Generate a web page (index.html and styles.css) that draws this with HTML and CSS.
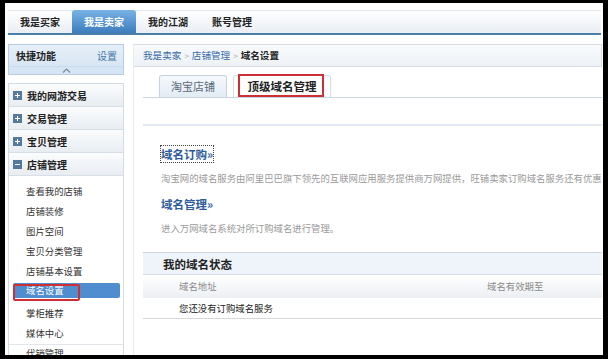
FILE: index.html
```html
<!DOCTYPE html>
<html lang="zh-CN">
<head>
    <meta charset="UTF-8">
    <title>域名设置</title>
    <link rel="stylesheet" href="styles.css">
</head>
<body>
    <div class="page">
        <div class="topnav">
            <a class="nav-tab">我是买家</a>
            <a class="nav-tab active">我是卖家</a>
            <a class="nav-tab">我的江湖</a>
            <a class="nav-tab">账号管理</a>
        </div>

        <div class="layout">
            <div class="sidebar">
                <div class="quick">
                    <span>快捷功能</span>
                    <a>设置</a>
                </div>
                <div class="fold">
                    <svg width="9" height="5" viewBox="0 0 9 5"><path d="M1 4.5 L4.5 1 L8 4.5" fill="none" stroke="#7d8c9a" stroke-width="1.2"/></svg>
                </div>

                <div class="menu">
                    <div class="menu-item"><i class="ico plus"></i>我的网游交易</div>
                    <div class="menu-item"><i class="ico plus"></i>交易管理</div>
                    <div class="menu-item"><i class="ico plus"></i>宝贝管理</div>
                    <div class="menu-item"><i class="ico minus"></i>店铺管理</div>
                    <ul class="sub">
                        <li>查看我的店铺</li>
                        <li>店铺装修</li>
                        <li>图片空间</li>
                        <li>宝贝分类管理</li>
                        <li>店铺基本设置</li>
                        <li class="current"><span>域名设置</span></li>
                        <li>掌柜推荐</li>
                        <li>媒体中心</li>
                    </ul>
                    <div class="sub-more">代销管理</div>
                </div>
            </div>

            <div class="main">
                <div class="crumb">
                    <a>我是卖家</a><span class="sep">&gt;</span><a>店铺管理</a><span class="sep">&gt;</span><b>域名设置</b>
                </div>

                <div class="tabs">
                    <div class="tab">淘宝店铺</div>
                    <div class="tab active"><span>顶级域名管理</span></div>
                </div>

                <div class="panel">
                    <h3><a class="focus">域名订购»</a></h3>
                    <p>淘宝网的域名服务由阿里巴巴旗下领先的互联网应用服务提供商万网提供，旺铺卖家订购域名服务还有优惠</p>
                    <h3 class="second"><a>域名管理»</a></h3>
                    <p>进入万网域名系统对所订购域名进行管理。</p>
                </div>

                <div class="status">
                    <div class="status-head">我的域名状态</div>
                    <div class="status-cols">
                        <span class="col-name">域名地址</span>
                        <span>域名有效期至</span>
                    </div>
                    <div class="status-row">您还没有订购域名服务</div>
                </div>
            </div>
        </div>
    </div>
</body>
</html>
```

FILE: styles.css
```css
body {
    margin: 0;
    padding: 0;
    background-color: #000000;
    font-family: "Noto Sans CJK SC", "Liberation Sans", sans-serif;
    font-size: 9.4px;
    color: #333333;
}

a {
    cursor: pointer;
}

.page {
    margin: 3px 5px 0 5px;
    width: 598px;
    height: 352px;
    background-color: #ffffff;
    overflow: hidden;
}

/* top navigation */

.topnav {
    display: flex;
    margin: 7px 2px 0 3px;
    height: 22px;
    border-top: 1px solid #e4e8ec;
    border-bottom: 2px solid #4a7fab;
    background: linear-gradient(#ffffff, #e9eef3);
}

.nav-tab {
    width: 64px;
    line-height: 22px;
    text-align: center;
    font-size: 10px;
    font-weight: bold;
    color: #222222;
}

.nav-tab.active {
    margin-top: -1px;
    line-height: 23px;
    border-radius: 3px 3px 0 0;
    background: linear-gradient(#78b3e4, #3d7dbd);
    color: #ffffff;
}

.layout {
    display: flex;
    gap: 9px;
    margin-top: 9px;
    padding-left: 3px;
}

/* sidebar */

.sidebar {
    width: 116px;
    flex-shrink: 0;
}

.quick {
    display: flex;
    justify-content: space-between;
    align-items: center;
    box-sizing: border-box;
    height: 22px;
    padding: 0 6px 0 7px;
    border: 1px solid #b8cde2;
    border-bottom: none;
    background: linear-gradient(#e6eff8, #d8e6f3);
    font-size: 10px;
}

.quick span {
    font-weight: bold;
    color: #222222;
}

.quick a {
    color: #4776ad;
}

.fold {
    display: flex;
    justify-content: center;
    align-items: center;
    box-sizing: border-box;
    height: 9px;
    border: 1px solid #b8cde2;
    border-top-color: #c9dae9;
    background-color: #d6e5f3;
}

.menu {
    margin-top: 8px;
    border: 1px solid #d3dbe3;
    border-bottom: none;
}

.menu-item {
    display: flex;
    align-items: center;
    box-sizing: border-box;
    height: 23px;
    padding-left: 4px;
    border-bottom: 1px solid #d7dee5;
    background: linear-gradient(#fbfcfd, #e8edf2);
    font-size: 10px;
    font-weight: bold;
    color: #222222;
}

.ico {
    position: relative;
    width: 9px;
    height: 9px;
    margin-right: 5px;
    background-color: #55799d;
}

.ico::before,
.ico.plus::after {
    content: "";
    position: absolute;
    background-color: #ffffff;
}

.ico::before {
    left: 2px;
    top: 4px;
    width: 5px;
    height: 1px;
}

.ico.plus::after {
    left: 4px;
    top: 2px;
    width: 1px;
    height: 5px;
}

.sub {
    list-style: none;
    margin: 0;
    padding: 5px 0 1px 0;
    border-bottom: 1px solid #e2e6ea;
}

.sub li {
    height: 20px;
    line-height: 20px;
    padding-left: 17px;
}

.sub li.current {
    position: relative;
    padding-left: 0;
}

.sub li.current span {
    display: block;
    margin: 2px 3px 0 4px;
    height: 15px;
    line-height: 15px;
    padding-left: 13px;
    border-radius: 2px;
    background-color: #508dcf;
    color: #ffffff;
}

.sub li.current::after {
    content: "";
    position: absolute;
    left: 4px;
    top: 1px;
    width: 63px;
    height: 13px;
    border: 2px solid #cf2f33;
    border-radius: 2px;
}

.sub-more {
    height: 20px;
    line-height: 16px;
    padding-left: 17px;
}

/* main area */

.main {
    width: 468px;
    min-width: 0;
    white-space: nowrap;
    overflow: hidden;
    border-left: 1px solid #e6ebf0;
    height: 320px;
}

.crumb {
    box-sizing: border-box;
    height: 23px;
    line-height: 21px;
    padding-left: 9px;
    border: 1px solid #d6dee6;
    border-left: none;
    background: linear-gradient(#f8fafc, #eef2f6);
    font-size: 9.6px;
}

.crumb a {
    color: #3a6aa8;
}

.crumb b {
    color: #222222;
}

.crumb .sep {
    margin: 0 3px;
    font-size: 8px;
    color: #a0a8b0;
}

.tabs {
    display: flex;
    gap: 6px;
    margin: 8px 0 0 9px;
    padding-left: 16px;
    border-bottom: 1px solid #cbd6e1;
}

.tab {
    box-sizing: border-box;
    width: 68px;
    height: 22px;
    line-height: 21px;
    text-align: center;
    border: 1px solid #c6d4e1;
    border-bottom: none;
    border-radius: 3px 3px 0 0;
    background: linear-gradient(#f6f9fc, #e2ebf4);
    font-size: 11px;
    color: #5a6b7c;
}

.tab.active {
    position: relative;
    width: 98px;
    background: #ffffff;
    border-color: #d6dee6;
    font-size: 11.5px;
    font-weight: bold;
    color: #222222;
}

.tab.active::after {
    content: "";
    position: absolute;
    left: 4px;
    top: -2px;
    width: 82px;
    height: 19px;
    border: 2px solid #cd2f35;
}

.panel {
    margin: 26px 0 0 9px;
    padding: 19px 0 0 18px;
    border-top: 2px solid #e2e9f0;
}

.panel h3 {
    margin: 0;
    height: 18px;
    line-height: 18px;
    font-size: 11.5px;
}

.panel h3 a {
    color: #2d5c9b;
}

.panel h3 a.focus {
    outline: 1px dotted #444444;
}

.panel h3.second {
    margin-top: 9px;
}

.panel p {
    margin: 7px 0 0 0;
    height: 16px;
    line-height: 16px;
    color: #9a9a9a;
}

.status {
    margin: 16px 0 0 9px;
}

.status-head {
    box-sizing: border-box;
    height: 23px;
    line-height: 22px;
    padding-left: 20px;
    border-top: 1px solid #c9d5e1;
    border-bottom: 1px solid #d6dee6;
    background-color: #eef4fa;
    font-size: 11.5px;
    font-weight: bold;
    color: #222222;
}

.status-cols {
    display: flex;
    height: 23px;
    line-height: 22px;
    padding-left: 36px;
    background: linear-gradient(#ffffff, #eceff2);
    color: #8a8a8a;
}

.status-cols .col-name {
    width: 308px;
}

.status-row {
    height: 20px;
    line-height: 20px;
    padding-left: 36px;
    border-bottom: 1px solid #d8d8d8;
    color: #222222;
}
```
